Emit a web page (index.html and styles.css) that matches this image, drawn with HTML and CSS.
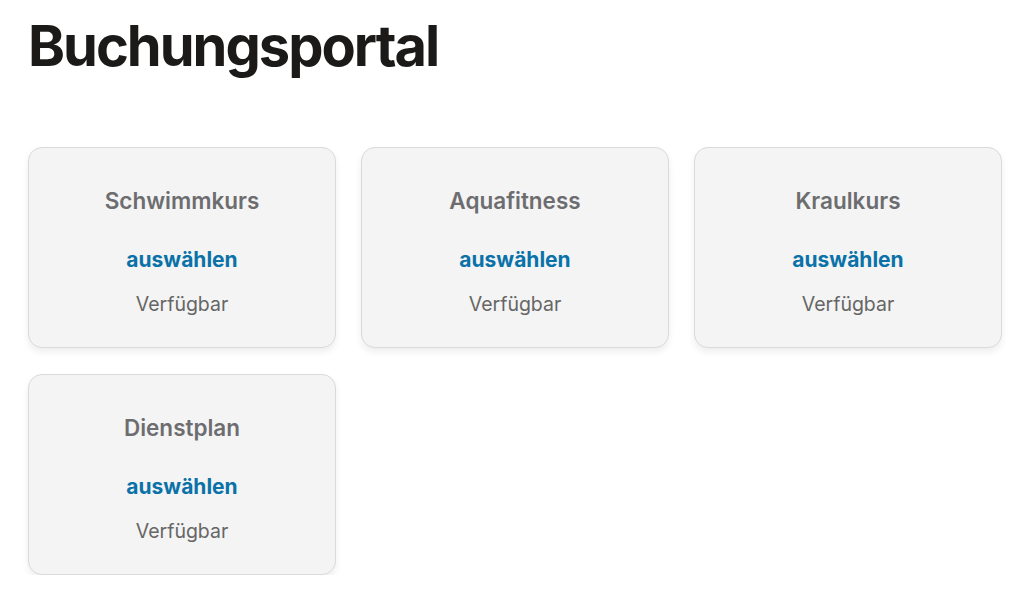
FILE: index.html
```html
<!DOCTYPE html>
<html lang="de">
<head>
<meta charset="utf-8">
<title>Buchungsportal</title>
<link rel="stylesheet" href="styles.css">
</head>
<body>
<main class="page">
  <h1 class="title">Buchungsportal</h1>
  <div class="grid">
    <div class="card">
      <h2 class="card-title">Schwimmkurs</h2>
      <a class="card-link" href="#">auswählen</a>
      <p class="card-status">Verfügbar</p>
    </div>
    <div class="card">
      <h2 class="card-title">Aquafitness</h2>
      <a class="card-link" href="#">auswählen</a>
      <p class="card-status">Verfügbar</p>
    </div>
    <div class="card">
      <h2 class="card-title">Kraulkurs</h2>
      <a class="card-link" href="#">auswählen</a>
      <p class="card-status">Verfügbar</p>
    </div>
    <div class="card">
      <h2 class="card-title">Dienstplan</h2>
      <a class="card-link" href="#">auswählen</a>
      <p class="card-status">Verfügbar</p>
    </div>
  </div>
</main>
</body>
</html>
```
FILE: styles.css
```css
* { box-sizing: border-box; }
html, body { margin: 0; background: #fff; }
body { font-family: Inter, "Noto Sans", sans-serif; }
.page { padding: 14px 22px 0 28px; }
.title {
  margin: 0;
  font-size: 56px;
  font-weight: 700;
  letter-spacing: -2px;
  line-height: 64px;
  color: #1b1a19;
}
.grid {
  margin-top: 69px;
  display: grid;
  grid-template-columns: repeat(3, 308px);
  gap: 26px 25px;
}
.card {
  height: 201px;
  background: #f4f4f4;
  border: 1px solid #dadada;
  border-radius: 14px;
  box-shadow: 0 4px 7px rgba(0,0,0,0.07);
  display: flex;
  flex-direction: column;
  align-items: center;
  padding-top: 39px;
}
.card-title {
  margin: 0;
  font-size: 22.5px;
  font-weight: 600;
  color: #6d6d70;
  line-height: 28px;
}
.card-link {
  margin-top: 31px;
  font-size: 21px;
  font-weight: 700;
  color: #0a72a8;
  text-decoration: none;
  line-height: 28px;
}
.card-status {
  margin: 18px 0 0;
  font-size: 19.5px;
  color: #666;
  line-height: 24px;
}
```
